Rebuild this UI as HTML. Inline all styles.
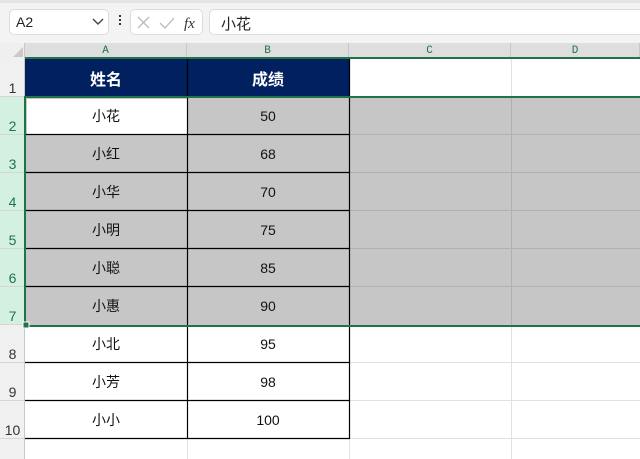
<!DOCTYPE html>
<html><head><meta charset="utf-8"><style>
*{margin:0;padding:0;box-sizing:border-box}
body{width:640px;height:459px;overflow:hidden;background:#fff;font-family:"Liberation Sans","Noto Sans CJK SC",sans-serif;position:relative}
.a{position:absolute}
.c{position:absolute;display:flex;align-items:center;justify-content:center;font-size:14px;color:#111}
.rh{position:absolute;left:0;width:25px;font-size:14px;color:#333;font-family:"Liberation Sans",sans-serif;display:flex;align-items:flex-end;justify-content:center;padding-bottom:0px;border-bottom:1px solid #d6d6d6;background:#f0f0f0}
.ch{position:absolute;top:43px;height:16px;font-family:"Liberation Mono",monospace;font-size:11px;color:#217346;display:flex;align-items:center;justify-content:center;background:#dedede;border-right:1px solid #c8c8c8}
</style></head><body>
<!-- toolbar -->
<div class="a" style="left:0;top:0;width:640px;height:43px;background:#f3f3f3"></div>
<div class="a" style="left:0;top:0;width:640px;height:3px;background:#e4e4e4"></div>
<div class="a" style="left:9px;top:9px;width:100px;height:26px;background:#fff;border:1px solid #dcdcdc;border-radius:5px;font-size:14px;padding:4px 6px;color:#222">A2</div>
<svg class="a" style="left:92px;top:17px" width="12" height="10"><path d="M1 2 L6 7 L11 2" stroke="#444" stroke-width="1.4" fill="none"/></svg>
<div class="a" style="left:119px;top:15px;width:2px;height:2px;background:#333;box-shadow:0 4px 0 #333,0 8px 0 #333"></div>
<div class="a" style="left:130px;top:9px;width:73px;height:26px;background:#fff;border:1px solid #dcdcdc;border-radius:5px"></div>
<svg class="a" style="left:136px;top:14px" width="70" height="18"><path d="M2 3 L13 14 M13 3 L2 14" stroke="#bbb" stroke-width="1.3"/><path d="M24 9 L29 14 L38 4" stroke="#bbb" stroke-width="1.3" fill="none"/><text x="48" y="14" font-family="Liberation Serif" font-style="italic" font-size="15" fill="#333">fx</text></svg>
<div class="a" style="left:209px;top:9px;width:440px;height:26px;background:#fff;border:1px solid #dcdcdc;border-radius:5px;font-size:15px;padding:3px 11px;color:#222">小花</div>
<!-- column headers -->
<div class="a" style="left:0;top:43px;width:25px;height:16px;background:#efefef;border-right:1px solid #c8c8c8"></div>
<svg class="a" style="left:12px;top:46px" width="12" height="12"><path d="M11 1 L11 11 L1 11Z" fill="#c9c9c9"/></svg>
<div class="ch" style="left:25px;width:162px">A</div>
<div class="ch" style="left:187px;width:162px">B</div>
<div class="ch" style="left:349px;width:162px">C</div>
<div class="ch" style="left:511px;width:129px">D</div>
<div class="a" style="left:25px;top:57px;width:615px;height:2px;background:#217346"></div>
<!-- row headers -->
<div class="rh" style="top:59px;height:38px">1</div>
<div class="rh" style="top:97px;height:38px;background:#d3f0e0;color:#217346">2</div>
<div class="rh" style="top:135px;height:38px;background:#d3f0e0;color:#217346">3</div>
<div class="rh" style="top:173px;height:38px;background:#d3f0e0;color:#217346">4</div>
<div class="rh" style="top:211px;height:38px;background:#d3f0e0;color:#217346">5</div>
<div class="rh" style="top:249px;height:38px;background:#d3f0e0;color:#217346">6</div>
<div class="rh" style="top:287px;height:38px;background:#d3f0e0;color:#217346">7</div>
<div class="rh" style="top:325px;height:38px">8</div>
<div class="rh" style="top:363px;height:38px">9</div>
<div class="rh" style="top:401px;height:38px">10</div>
<div class="rh" style="top:439px;height:20px;border:none"></div>
<div class="a" style="left:24px;top:43px;width:1px;height:416px;background:#c8c8c8"></div>
<!-- light gridlines in C/D -->
<svg class="a" style="left:0;top:0" width="640" height="459">
<g stroke="#e1e1e1" stroke-width="1">
<line x1="511.5" y1="59" x2="511.5" y2="459"/>
<line x1="349" y1="96.5" x2="640" y2="96.5"/>
<line x1="349" y1="362.5" x2="640" y2="362.5"/>
<line x1="349" y1="400.5" x2="640" y2="400.5"/>
<line x1="349" y1="438.5" x2="640" y2="438.5"/>
<line x1="187.5" y1="439" x2="187.5" y2="459"/>
<line x1="349.5" y1="439" x2="349.5" y2="459"/>
<line x1="25" y1="438.5" x2="349" y2="438.5"/>
</g>
<rect x="25" y="59" width="324" height="38" fill="#002060"/>
<rect x="26" y="97" width="614" height="228" fill="#c6c6c6"/>
<rect x="27" y="99" width="160" height="36" fill="#fff"/>
<g stroke="#b0b0b0"><line x1="511.5" y1="97" x2="511.5" y2="325"/>
<line x1="349" y1="134.5" x2="640" y2="134.5"/><line x1="349" y1="172.5" x2="640" y2="172.5"/><line x1="349" y1="210.5" x2="640" y2="210.5"/><line x1="349" y1="248.5" x2="640" y2="248.5"/><line x1="349" y1="286.5" x2="640" y2="286.5"/></g>
<g stroke="#000" stroke-width="1.2">
<line x1="187.5" y1="59" x2="187.5" y2="439"/><line x1="349.5" y1="59" x2="349.5" y2="439"/>
<line x1="25" y1="134.5" x2="350" y2="134.5"/><line x1="25" y1="172.5" x2="350" y2="172.5"/><line x1="25" y1="210.5" x2="350" y2="210.5"/><line x1="25" y1="248.5" x2="350" y2="248.5"/><line x1="25" y1="286.5" x2="350" y2="286.5"/><line x1="25" y1="362.5" x2="350" y2="362.5"/><line x1="25" y1="400.5" x2="350" y2="400.5"/><line x1="25" y1="438.5" x2="350" y2="438.5"/>
</g>
<rect x="25" y="97" width="616" height="229" fill="none" stroke="#217346" stroke-width="2"/>
<rect x="23" y="322" width="6" height="6" fill="#217346" stroke="#fff" stroke-width="1"/>
</svg>
<!-- text -->
<div class="c" style="left:25px;top:59px;width:162px;height:38px;color:#fff;font-weight:bold;font-size:16px">姓名</div>
<div class="c" style="left:187px;top:59px;width:162px;height:38px;color:#fff;font-weight:bold;font-size:16px">成绩</div>
<div class="c" style="left:25px;top:97px;width:162px;height:38px">小花</div><div class="c" style="left:187px;top:97px;width:162px;height:38px">50</div>
<div class="c" style="left:25px;top:135px;width:162px;height:38px">小红</div><div class="c" style="left:187px;top:135px;width:162px;height:38px">68</div>
<div class="c" style="left:25px;top:173px;width:162px;height:38px">小华</div><div class="c" style="left:187px;top:173px;width:162px;height:38px">70</div>
<div class="c" style="left:25px;top:211px;width:162px;height:38px">小明</div><div class="c" style="left:187px;top:211px;width:162px;height:38px">75</div>
<div class="c" style="left:25px;top:249px;width:162px;height:38px">小聪</div><div class="c" style="left:187px;top:249px;width:162px;height:38px">85</div>
<div class="c" style="left:25px;top:287px;width:162px;height:38px">小惠</div><div class="c" style="left:187px;top:287px;width:162px;height:38px">90</div>
<div class="c" style="left:25px;top:325px;width:162px;height:38px">小北</div><div class="c" style="left:187px;top:325px;width:162px;height:38px">95</div>
<div class="c" style="left:25px;top:363px;width:162px;height:38px">小芳</div><div class="c" style="left:187px;top:363px;width:162px;height:38px">98</div>
<div class="c" style="left:25px;top:401px;width:162px;height:38px">小小</div><div class="c" style="left:187px;top:401px;width:162px;height:38px">100</div>
</body></html>
